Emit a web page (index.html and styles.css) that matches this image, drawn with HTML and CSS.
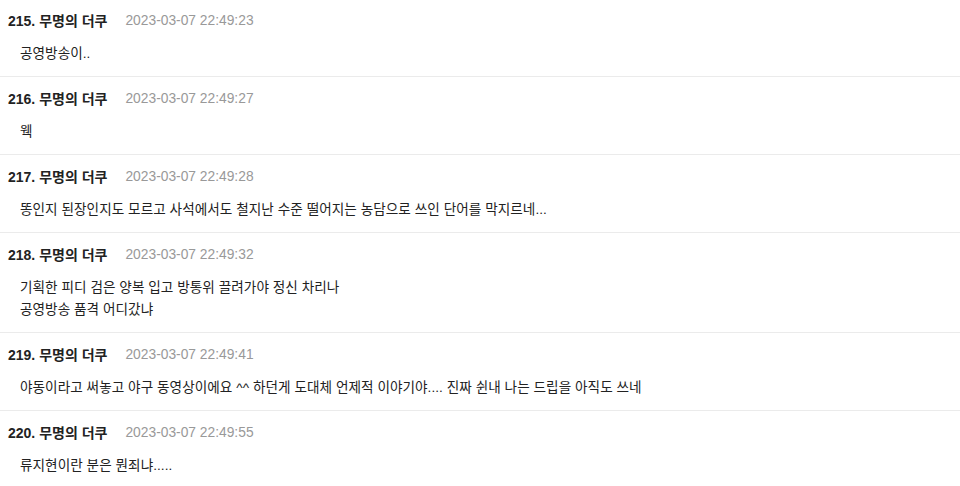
FILE: index.html
```html
<!DOCTYPE html>
<html lang="ko">
<head>
<meta charset="utf-8">
<link rel="stylesheet" href="styles.css">
</head>
<body>
<ul class="comments">
  <li class="comment">
    <div class="meta"><span class="name">215. 무명의 더쿠</span><span class="time">2023-03-07 22:49:23</span></div>
    <div class="body">공영방송이..</div>
  </li>
  <li class="comment">
    <div class="meta"><span class="name">216. 무명의 더쿠</span><span class="time">2023-03-07 22:49:27</span></div>
    <div class="body">웩</div>
  </li>
  <li class="comment">
    <div class="meta"><span class="name">217. 무명의 더쿠</span><span class="time">2023-03-07 22:49:28</span></div>
    <div class="body">똥인지 된장인지도 모르고 사석에서도 철지난 수준 떨어지는 농담으로 쓰인 단어를 막지르네...</div>
  </li>
  <li class="comment">
    <div class="meta"><span class="name">218. 무명의 더쿠</span><span class="time">2023-03-07 22:49:32</span></div>
    <div class="body">기획한 피디 검은 양복 입고 방통위 끌려가야 정신 차리나<br>공영방송 품격 어디갔냐</div>
  </li>
  <li class="comment">
    <div class="meta"><span class="name">219. 무명의 더쿠</span><span class="time">2023-03-07 22:49:41</span></div>
    <div class="body">야동이라고 써놓고 야구 동영상이에요 ^^ 하던게 도대체 언제적 이야기야.... 진짜 쉰내 나는 드립을 아직도 쓰네</div>
  </li>
  <li class="comment">
    <div class="meta"><span class="name">220. 무명의 더쿠</span><span class="time">2023-03-07 22:49:55</span></div>
    <div class="body">류지현이란 분은 뭔죄냐.....</div>
  </li>
</ul>
</body>
</html>
```
FILE: styles.css
```css
html, body {
  margin: 0;
  padding: 0;
  background: #fff;
}
body {
  font-family: "Liberation Sans", "Noto Sans CJK KR", sans-serif;
  color: #222;
}
.comments {
  list-style: none;
  margin: 0;
  padding: 0;
  margin-top: -1px;
}
.comment {
  padding: 11px 8px;
  border-bottom: 1px solid #ebebeb;
}
.meta {
  display: flex;
  align-items: center;
  gap: 18px;
  height: 22px;
  line-height: 22px;
}
.name {
  font-size: 14px;
  font-weight: bold;
  color: #222;
}
.time {
  font-size: 13.8px;
  color: #999;
}
.body {
  margin-top: 11px;
  padding-left: 12px;
  font-size: 13.6px;
  line-height: 22px;
  letter-spacing: 0.05px;
  color: #222;
}
```
